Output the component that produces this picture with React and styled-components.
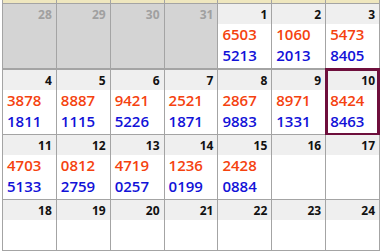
import React from 'react';
import styled, { createGlobalStyle, css } from 'styled-components';

const GlobalStyle = createGlobalStyle`
  body {
    margin: 0;
    background: #fff;
    font-family: 'Open Sans', 'Noto Sans', sans-serif;
  }
`;

const weeks = [
  [
    { day: 28, other: true },
    { day: 29, other: true },
    { day: 30, other: true },
    { day: 31, other: true },
    { day: 1, top: '6503', bottom: '5213' },
    { day: 2, top: '1060', bottom: '2013' },
    { day: 3, top: '5473', bottom: '8405' },
  ],
  [
    { day: 4, top: '3878', bottom: '1811' },
    { day: 5, top: '8887', bottom: '1115' },
    { day: 6, top: '9421', bottom: '5226' },
    { day: 7, top: '2521', bottom: '1871' },
    { day: 8, top: '2867', bottom: '9883' },
    { day: 9, top: '8971', bottom: '1331' },
    { day: 10, top: '8424', bottom: '8463', today: true },
  ],
  [
    { day: 11, top: '4703', bottom: '5133' },
    { day: 12, top: '0812', bottom: '2759' },
    { day: 13, top: '4719', bottom: '0257' },
    { day: 14, top: '1236', bottom: '0199' },
    { day: 15, top: '2428', bottom: '0884' },
    { day: 16 },
    { day: 17 },
  ],
  [
    { day: 18 }, { day: 19 }, { day: 20 }, { day: 21 },
    { day: 22 }, { day: 23 }, { day: 24 },
  ],
];

const Page = styled.div`
  padding-left: 2px;
  height: 251px;
  overflow: hidden;
`;

const Calendar = styled.div`
  width: 377px;
  border-left: 1px solid #a4a4a4;
`;

const Week = styled.div`
  display: grid;
  grid-template-columns: repeat(7, 1fr);
  border-bottom: ${(p) => (p.$thick ? 2 : 1)}px solid #a4a4a4;
`;

const HeadStrip = styled(Week)`
  height: 3px;
  background: #efe7bf;
`;

const StripCell = styled.div`
  border-right: 1px solid #a4a4a4;
`;

const Cell = styled.div`
  position: relative;
  display: flex;
  flex-direction: column;
  border-right: 1px solid #a4a4a4;
  background: ${(p) => (p.$other ? '#d4d4d4' : '#fff')};
  ${(p) => p.$today && css`
    &::after {
      content: '';
      position: absolute;
      inset: -2px -1px -2px -1px;
      border: 3px solid #6e0f3c;
      pointer-events: none;
    }
  `}
`;

const DayNum = styled.div`
  height: 20px;
  line-height: 21px;
  padding-right: 4px;
  text-align: right;
  font-size: 12px;
  font-weight: 700;
  color: ${(p) => (p.$other ? '#a0a0a0' : '#111')};
  background: ${(p) => (p.$other ? 'transparent' : '#efefef')};
`;

const Body = styled.div`
  min-height: 28px;
  padding: 0 0 2px 4px;
`;

const Num = styled.div`
  font-size: 15px;
  font-weight: 600;
  line-height: 21px;
  color: ${(p) => (p.$kind === 'top' ? '#f5420f' : '#1212d8')};
`;

export default function App() {
  return (
    <Page>
      <GlobalStyle />
      <Calendar>
        <HeadStrip>
          {Array.from({ length: 7 }, (_, i) => <StripCell key={i} />)}
        </HeadStrip>
        {weeks.map((week, wi) => (
          <Week key={wi} $thick={wi === 0}>
            {week.map((c) => (
              <Cell key={`${wi}-${c.day}`} $other={c.other} $today={c.today}>
                <DayNum $other={c.other}>{c.day}</DayNum>
                <Body>
                  {c.top && <Num $kind="top">{c.top}</Num>}
                  {c.bottom && <Num $kind="bottom">{c.bottom}</Num>}
                </Body>
              </Cell>
            ))}
          </Week>
        ))}
      </Calendar>
    </Page>
  );
}
